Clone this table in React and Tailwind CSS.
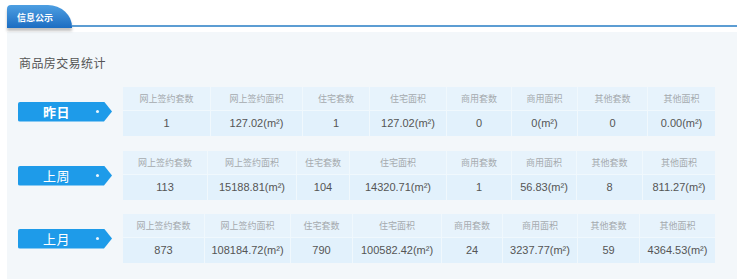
import React from "react";

const headers = ["网上签约套数", "网上签约面积", "住宅套数", "住宅面积", "商用套数", "商用面积", "其他套数", "其他面积"];

const groups = [
  {
    label: "昨日",
    bold: true,
    cols: "grid-cols-[88px_92px_67px_77px_65px_66px_70px_67px]",
    gap: "mt-[16px]",
    values: ["1", "127.02(m²)", "1", "127.02(m²)", "0", "0(m²)", "0", "0.00(m²)"],
  },
  {
    label: "上周",
    bold: false,
    cols: "grid-cols-[85px_89px_53px_97px_65px_65px_66px_72px]",
    gap: "mt-[15px]",
    values: ["113", "15188.81(m²)", "104", "14320.71(m²)", "1", "56.83(m²)", "8", "811.27(m²)"],
  },
  {
    label: "上月",
    bold: false,
    cols: "grid-cols-[82px_86px_62px_89px_61px_75px_62px_75px]",
    gap: "mt-[14px]",
    values: ["873", "108184.72(m²)", "790", "100582.42(m²)", "24", "3237.77(m²)", "59", "4364.53(m²)"],
  },
];

function Badge({ label, bold }) {
  return (
    <div className="w-[94px] h-[20px] bg-[#1e9be9] rounded-l-[2px] [clip-path:polygon(0_0,86px_0,94px_50%,86px_100%,0_100%)] flex items-center pl-[25px] pr-[13px]">
      <span className={`text-white text-[13px] leading-none tracking-[0.5px] ${bold ? "font-bold" : "font-normal"}`}>{label}</span>
      <span className="flex-1" />
      <span className="w-[3px] h-[3px] rounded-full bg-white/90" />
    </div>
  );
}

function StatTable({ cols, values }) {
  return (
    <div className={`grid ${cols} w-[592px]`}>
      {headers.map((h, i) => (
        <div
          key={"h" + i}
          className={`h-[24px] flex items-center justify-center bg-[#e7f3fc] border-b border-[#f0f8fd] text-[9px] text-[#a5aaae] ${i < 7 ? "border-r" : ""}`}
        >
          {h}
        </div>
      ))}
      {values.map((v, i) => (
        <div
          key={"v" + i}
          className={`h-[25px] flex items-center justify-center bg-[#e2f1fc] border-[#f0f8fd] text-[11px] text-[#555] font-['Liberation_Sans',Arial,sans-serif] ${i < 7 ? "border-r" : ""}`}
        >
          {v}
        </div>
      ))}
    </div>
  );
}

export default function App() {
  return (
    <div className="w-[740px] h-[279px] bg-white overflow-hidden font-['Noto_Sans_CJK_SC','Noto_Sans',sans-serif]">
      <div className="flex items-end h-[28px] pl-[7px] pr-[3px]">
        <div className="w-[65px] h-[23px] rounded-tl-[4px] rounded-tr-[24px_22px] bg-gradient-to-b from-[#4d9fe2] to-[#1b6dc2] shadow-[0_3px_3px_rgba(0,0,0,0.25)] flex items-center pl-[10px] pt-[1px]">
          <span className="text-white text-[9px] font-bold leading-none">信息公示</span>
        </div>
        <div className="flex-1 h-[2px] bg-[#5c9dd3] mb-[1px]" />
      </div>
      <div className="mt-[4px] ml-[7px] mr-[3px] h-[260px] bg-[#f3f7fa] pt-[23px]">
        <div className="pl-[12px] text-[12px] leading-[16px] tracking-[0.4px] text-[#555]">商品房交易统计</div>
        {groups.map((g) => (
          <div key={g.label} className={`flex items-center ${g.gap}`}>
            <div className="ml-[11px]">
              <Badge label={g.label} bold={g.bold} />
            </div>
            <div className="ml-[11px]">
              <StatTable cols={g.cols} values={g.values} />
            </div>
          </div>
        ))}
      </div>
    </div>
  );
}
